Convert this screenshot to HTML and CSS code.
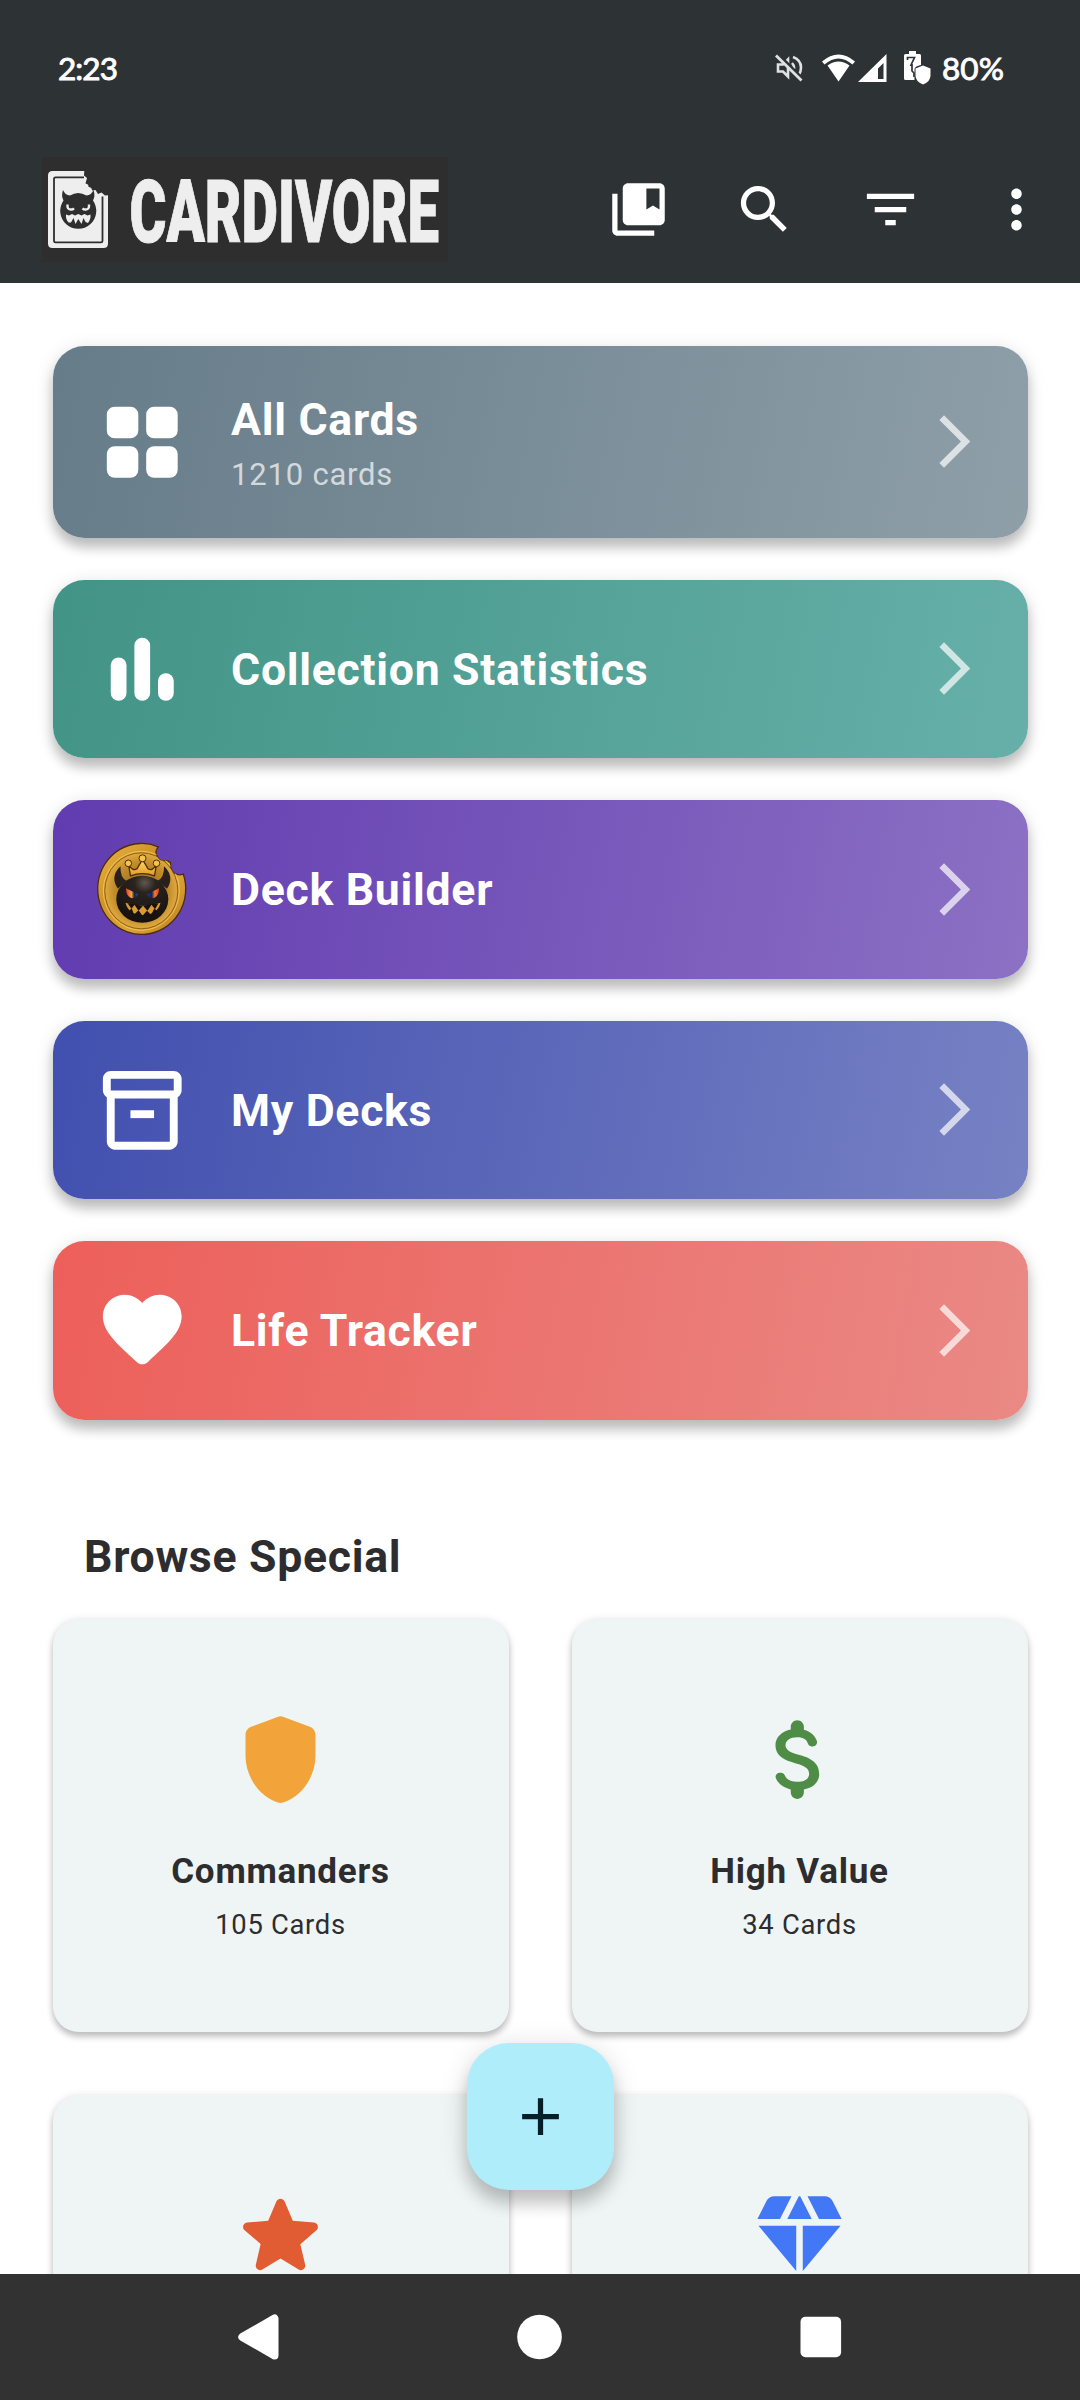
FILE: index.html
```html
<!DOCTYPE html>
<html lang="en">
<head>
<meta charset="utf-8">
<title>Cardivore</title>
<link rel="stylesheet" href="styles.css">
</head>
<body>
<div class="screen">
  <header class="top">
    <div class="status">
      <span class="clock">2:23</span>
      <div class="status-icons">
        <svg class="mute" width="28" height="28" viewBox="0 0 28 28" fill="none" stroke="#dfe1e2" stroke-width="2.600"><path d="M3 10.500h5l5-5v17l-5-5h-5z"/><path d="M17 9q4 4.500 0 9M18 3q8 3 8 10.500q0 4-2 7"/><path d="M3 0L28 25" stroke="#2d3235" stroke-width="3"/><path d="M1 1.500L26.500 26.500" stroke-width="2.800"/></svg>
        <svg class="wifi" width="33" height="28" viewBox="0 0 33 28"><path d="M0 7.500Q16.500-6.500 33 7.500L30.500 10.500Q16.500-1.500 2.500 10.500z" fill="#fff"/><path d="M5.500 11.500Q16.500 3.500 27.500 11.500L16.500 27.500z" fill="#fff"/></svg>
        <svg class="signal" width="29" height="28" viewBox="0 0 29 28"><path d="M28.500 0V28H0zM25.500 9L20 14.500V25H25.500z" fill="#fff" fill-rule="evenodd"/></svg>
        <svg class="battery" width="27" height="34" viewBox="0 0 27 34"><path d="M5 0h7v3h3.500q1.500 0 1.500 1.500V14q-6 1-6.500 4V29H1.500Q0 29 0 27.500V4.500Q0 3 1.500 3H5z" fill="#fff"/><path d="M3.500 9V6.500h7l-4 8.500M8 13v7l2 2v4" fill="none" stroke="#2d3235" stroke-width="1.700"/><path d="M19 14.500l7.500 3v7q0 6-7.500 9q-7.500-3-7.500-9v-7z" fill="#fff"/></svg>
        <span class="percent">80%</span>
      </div>
    </div>
    <div class="appbar">
      <svg class="logo" width="406" height="105" viewBox="0 0 406 105">
        <rect width="406" height="105" fill="#2e2e2e"/>
        <path d="M42.300 14H10.500Q6 14 6 18.500V86.500Q6 91 10.500 91H61.500Q66 91 66 86.500V38.300L63 38.500L59.500 35.500L56 37L53.500 33L50 33.500Q50 30 46.500 30Q47 27 43.500 26.500L45 21L42 18.500z" fill="#eee"/>
        <path d="M42 20.300H13.500Q12 20.300 12 22V84Q12 85.300 13.500 85.300H59Q60.500 85.300 60.500 84V39.500" fill="none" stroke="#2e2e2e" stroke-width="1.800"/>
        <path d="M21 33Q23 38 28 38.500Q36 33.500 44.500 38.500Q49.500 38 51.500 33Q53.500 39 51 43.500A18 18 0 1 1 21.500 43.500Q19 39 21 33z" fill="#2e2e2e"/>
        <path d="M25.500 47.500q-.5 5 3 5q2 .3 3.500-1.200M47 47.500q.5 5-3 5q-2 .3-3.500-1.200" fill="none" stroke="#eee" stroke-width="2.400"/>
        <path d="M24 57.500L27 58.500L30 57L33 58.500L36.300 57L39.500 58.500L42.500 57L45.500 58.500L48.500 57.500Q49 62 46 66L43.500 65L41.500 61L39.500 67L36.300 62L33.500 67L31.500 61L29 65.500L26.500 65.500Q23.500 62 24 57.500z" fill="#eee"/>
        <text class="wordmark" x="87.500" y="85" textLength="309.500" lengthAdjust="spacingAndGlyphs">CARDIVORE</text>
      </svg>
      <div class="actions">
        <span class="action"><svg viewBox="0 0 24 24"><path d="M4 6H2v14c0 1.100.9 2 2 2h14v-2H4V6z"/><path d="M20 2H8c-1.100 0-2 .9-2 2v12c0 1.100.9 2 2 2h12c1.100 0 2-.9 2-2V4c0-1.100-.9-2-2-2zm0 10l-2.500-1.500L15 12V4h5v8z"/></svg></span>
        <span class="action"><svg viewBox="0 0 24 24"><path d="M15.500 14h-.79l-.28-.27C15.410 12.590 16 11.110 16 9.500 16 5.910 13.090 3 9.500 3S3 5.910 3 9.500 5.910 16 9.500 16c1.610 0 3.090-.59 4.230-1.570l.27.28v.79l5 4.990L20.490 19l-4.990-5zm-6 0C7.010 14 5 11.990 5 9.500S7.010 5 9.500 5 14 7.010 14 9.500 11.990 14 9.500 14z"/></svg></span>
        <span class="action"><svg viewBox="0 0 24 24"><path d="M10 18h4v-2h-4v2zM3 6v2h18V6H3zm3 7h12v-2H6v2z"/></svg></span>
        <span class="action"><svg viewBox="0 0 24 24"><path d="M12 8c1.100 0 2-.9 2-2s-.9-2-2-2-2 .9-2 2 .9 2 2 2zm0 2c-1.100 0-2 .9-2 2s.9 2 2 2 2-.9 2-2-.9-2-2-2zm0 6c-1.100 0-2 .9-2 2s.9 2 2 2 2-.9 2-2-.9-2-2-2z"/></svg></span>
      </div>
    </div>
  </header>

  <main class="content">
    <nav class="menu">
      <a class="row row-all">
        <svg class="row-icon" viewBox="0 0 24 24"><rect x="3" y="3" width="8" height="8" rx="2"/><rect x="13" y="3" width="8" height="8" rx="2"/><rect x="3" y="13" width="8" height="8" rx="2"/><rect x="13" y="13" width="8" height="8" rx="2"/></svg>
        <span class="row-text"><span class="row-title">All Cards</span><span class="row-sub">1210 cards</span></span>
        <svg class="chevron" viewBox="0 0 24 24"><path d="M6.230 20.230L8 22l10-10L8 2 6.230 3.770 14.460 12z"/></svg>
      </a>
      <a class="row row-stats">
        <svg class="row-icon" viewBox="0 0 24 24"><rect x="4" y="9" width="4" height="11" rx="2"/><rect x="10" y="4" width="4" height="16" rx="2"/><rect x="16" y="13" width="4" height="7" rx="2"/></svg>
        <span class="row-text"><span class="row-title">Collection Statistics</span></span>
        <svg class="chevron" viewBox="0 0 24 24"><path d="M6.230 20.230L8 22l10-10L8 2 6.230 3.770 14.460 12z"/></svg>
      </a>
      <a class="row row-builder">
        <svg class="row-icon" viewBox="0 0 94.500 94.500">
          <defs>
            <linearGradient id="gold" x1="0" y1="0" x2="1" y2="1"><stop offset="0" stop-color="#edb644"/><stop offset=".35" stop-color="#cf9428"/><stop offset=".65" stop-color="#dba436"/><stop offset="1" stop-color="#b87b18"/></linearGradient>
            <radialGradient id="inner"><stop offset="0" stop-color="#8f6018"/><stop offset=".75" stop-color="#c28c2b"/><stop offset="1" stop-color="#dfab40"/></radialGradient>
            <radialGradient id="skin" cx=".55" cy=".15" r=".8"><stop offset="0" stop-color="#62574c"/><stop offset=".25" stop-color="#2a2421"/><stop offset="1" stop-color="#17120f"/></radialGradient>
            <linearGradient id="crown" x1="0" y1="0" x2="0" y2="1"><stop offset="0" stop-color="#ffdb62"/><stop offset="1" stop-color="#e39a26"/></linearGradient>
            <linearGradient id="eyeL"><stop offset="0" stop-color="#e83b18"/><stop offset=".45" stop-color="#f3a548"/><stop offset=".7" stop-color="#15243c"/><stop offset="1" stop-color="#2452d8"/></linearGradient>
            <linearGradient id="eyeR"><stop offset="0" stop-color="#1c2fc0"/><stop offset=".4" stop-color="#1a2440"/><stop offset=".65" stop-color="#f07c35"/><stop offset="1" stop-color="#e83b18"/></linearGradient>
            <clipPath id="coin-shape"><path d="M63.800 4Q59.500 9 63 14Q65 18.500 69 18Q73 17 76 20Q75.500 28 80 30.500Q84 33 88.800 31.300A44 45.500 0 1 1 63.800 4z"/></clipPath>
          </defs>
          <g transform="translate(-.5 .8)">
          <path d="M63.800 4Q59.500 9 63 14Q65 18.500 69 18Q73 17 76 20Q75.500 28 80 30.500Q84 33 88.800 31.300A44 45.500 0 1 1 63.800 4z" fill="url(#gold)" stroke="#4b2d0c" stroke-width="1.300"/>
          <g clip-path="url(#coin-shape)">
            <ellipse cx="46.800" cy="48" rx="36.500" ry="38" fill="url(#inner)" stroke="#8f6019" stroke-width="1"/>
            <ellipse cx="46.800" cy="48" rx="38" ry="39.500" fill="none" stroke="#f0c25a" stroke-width="1"/>
          </g>
          <path d="M26 23.500Q15 34 23.500 46L32 38Q25.500 35 26 23.500zM69.500 23.500Q80.500 34 72.500 46L63 38Q70 35 69.500 23.500z" fill="#2a211c"/>
          <ellipse cx="47.800" cy="56.500" rx="26" ry="23.500" fill="url(#skin)"/>
          <path d="M34 21.500Q38 29 42.500 26L48 16.500L53.500 26Q58 29 62 21.500L60 33Q48 28.500 36 33z" fill="url(#crown)" stroke="#4b2d0c" stroke-width="1.300"/>
          <g fill="#f5c34d" stroke="#4b2d0c"><circle cx="33.800" cy="20.500" r="3.300"/><circle cx="48" cy="15.500" r="3.500"/><circle cx="62" cy="20.500" r="3.300"/></g>
          <path d="M31.500 45.500L43.500 51.500Q41 56.500 36 55Q31.500 53 31.500 45.500z" fill="url(#eyeL)"/>
          <path d="M64.500 45.500L52.500 51.500Q55 56.500 60 55Q64.500 53 64.500 45.500z" fill="url(#eyeR)"/>
          <path d="M31 60Q48 66 66 60Q63 72 48.500 72.500Q34 72 31 60z" fill="#d99a35"/>
          <path d="M33 60.500L37 66L40 62L44 68L48.500 63L53 68L57 62L60.500 66.500L64 60.500L48 63zM34.500 69L37 65L39.500 72L44 67.500L48 73L52.500 68L56.500 72L60 65.500L63 69L58 74H39z" fill="#17120f"/>
          </g>
        </svg>
        <span class="row-text"><span class="row-title">Deck Builder</span></span>
        <svg class="chevron" viewBox="0 0 24 24"><path d="M6.230 20.230L8 22l10-10L8 2 6.230 3.770 14.460 12z"/></svg>
      </a>
      <a class="row row-decks">
        <svg class="row-icon" viewBox="0 0 24 24"><path d="M20 2H4c-1 0-2 .9-2 2v3.010c0 .72.43 1.340 1 1.690V20c0 1.100 1.100 2 2 2h14c.9 0 2-.9 2-2V8.700c.57-.35 1-.97 1-1.690V4c0-1.100-1-2-2-2zm-1 18H5V9h14v11zm1-13H4V4h16v3z"/><path d="M9 12h6v2H9z"/></svg>
        <span class="row-text"><span class="row-title">My Decks</span></span>
        <svg class="chevron" viewBox="0 0 24 24"><path d="M6.230 20.230L8 22l10-10L8 2 6.230 3.770 14.460 12z"/></svg>
      </a>
      <a class="row row-life">
        <svg class="row-icon" viewBox="0 0 24 24"><path d="M13.350 20.130c-.76.69-1.930.69-2.690-.01l-.11-.1C5.300 15.270 1.870 12.160 2 8.280c.06-1.700.93-3.330 2.340-4.290 2.640-1.800 5.900-.96 7.660 1.100 1.760-2.060 5.020-2.910 7.660-1.100 1.410.96 2.280 2.590 2.340 4.290.14 3.880-3.300 6.990-8.550 11.760l-.1.090z"/></svg>
        <span class="row-text"><span class="row-title">Life Tracker</span></span>
        <svg class="chevron" viewBox="0 0 24 24"><path d="M6.230 20.230L8 22l10-10L8 2 6.230 3.770 14.460 12z"/></svg>
      </a>
    </nav>

    <h2 class="section-title">Browse Special</h2>
    <div class="grid">
      <div class="card">
        <svg class="card-icon commanders" viewBox="0 0 24 24"><path d="M11.300 2.260l-6 2.250C4.520 4.810 4 5.550 4 6.390v4.710c0 4.830 3.130 9.370 7.430 10.750.37.12.77.12 1.140 0C16.870 20.480 20 15.930 20 11.100V6.390c0-.83-.52-1.580-1.300-1.870l-6-2.250c-.45-.18-.95-.18-1.400-.01z"/></svg>
        <span class="card-title">Commanders</span>
        <span class="card-sub">105 Cards</span>
      </div>
      <div class="card">
        <svg class="card-icon value" viewBox="0 0 24 24"><path d="M11.800 10.900c-2.270-.59-3-1.200-3-2.150 0-1.090 1.010-1.850 2.700-1.850 1.420 0 2.130.54 2.390 1.400.12.4.45.7.87.7h.3c.66 0 1.130-.65.9-1.270-.42-1.180-1.400-2.160-2.960-2.540V4.500c0-.83-.67-1.500-1.500-1.500S10 3.670 10 4.500v.66c-1.940.42-3.500 1.680-3.500 3.610 0 2.310 1.910 3.460 4.700 4.130 2.500.6 3 1.480 3 2.410 0 .69-.49 1.790-2.700 1.790-1.650 0-2.500-.59-2.830-1.430-.15-.39-.49-.67-.9-.67h-.28c-.67 0-1.140.68-.89 1.300.57 1.390 1.900 2.210 3.400 2.530v.67c0 .83.67 1.500 1.500 1.500s1.500-.67 1.500-1.500v-.65c1.950-.37 3.500-1.500 3.500-3.550 0-2.840-2.430-3.810-4.700-4.400z"/></svg>
        <span class="card-title">High Value</span>
        <span class="card-sub">34 Cards</span>
      </div>
      <div class="card">
        <svg class="card-icon star" viewBox="0 0 24 24"><path d="M12 17.270l4.150 2.510c.76.46 1.690-.22 1.490-1.080l-1.100-4.720 3.670-3.180c.67-.58.31-1.680-.57-1.750l-4.830-.41-1.890-4.460c-.34-.81-1.500-.81-1.840 0L9.190 8.630l-4.830.41c-.88.07-1.240 1.170-.57 1.750l3.670 3.180-1.100 4.720c-.2.86.73 1.540 1.490 1.080l4.150-2.500z"/></svg>
      </div>
      <div class="card">
        <svg class="card-icon gem" viewBox="0 0 24 24"><path d="M12.160 3h-.32L9.210 8.250h5.580zM16.460 8.250h5.160l-2.070-4.140C19.210 3.430 18.520 3 17.760 3h-3.930l2.630 5.250zM21.380 9.750h-8.630V20.100zM11.250 20.100V9.750H2.620zM7.540 8.250 10.160 3H6.240c-.76 0-1.450.43-1.790 1.110L2.380 8.250h5.160z"/></svg>
      </div>
    </div>
  </main>

  <footer class="navbar">
    <svg width="46" height="46" viewBox="0 0 46 46"><path d="M6.300 23L38.500 4.500V41.500z" fill="#fff" stroke="#fff" stroke-width="8" stroke-linejoin="round"/></svg>
    <svg width="46" height="46" viewBox="0 0 46 46"><circle cx="22.500" cy="23" r="22.300" fill="#fff"/></svg>
    <svg width="46" height="46" viewBox="0 0 46 46"><rect x="2.500" y="2.700" width="40.600" height="40.600" rx="5" fill="#fff"/></svg>
  </footer>
  <button class="fab"><svg viewBox="0 0 24 24"><path d="M19 13h-6v6h-2v-6H5v-2h6V5h2v6h6v2z"/></svg></button>
</div>
</body>
</html>
```
FILE: styles.css
```css
* { box-sizing: border-box; }
body { margin: 0; font-family: Roboto, sans-serif; background: #fff; }
svg { display: block; flex: none; }

.screen { position: relative; width: 1080px; height: 2400px; display: flex; flex-direction: column; overflow: hidden; }

.top { flex: none; height: 283px; background: #2d3235; color: #fff; }
.status { height: 136px; padding: 0 76px 0 58px; display: flex; justify-content: space-between; align-items: center; }
.clock, .percent { font-family: Lato, sans-serif; font-weight: 400; font-size: 31.5px; line-height: 36px; -webkit-text-stroke: 0.9px #fff; }
.clock { letter-spacing: -0.9px; }
.status-icons { display: flex; align-items: center; }
.wifi { margin-left: 19px; }
.signal { margin-left: 3px; }
.battery { margin-left: 17px; }
.percent { width: 62px; margin-left: 11px; letter-spacing: 0.1px; white-space: nowrap; }
.clock, .percent { padding-bottom: 1px; }

.appbar { height: 147px; display: flex; align-items: center; justify-content: space-between; padding-left: 42px; }
.logo { overflow: visible; }
.wordmark { font-weight: 900; font-size: 87.500px; fill: #eee; stroke: #eee; stroke-width: 1px; }
.actions { display: flex; margin-right: 0.5px; }
.action { width: 126px; height: 126px; display: flex; align-items: center; justify-content: center; fill: #fff; }
.action svg { width: 63px; height: 63px; }

.content { flex: 1; min-height: 0; overflow: hidden; padding: 63px 52.5px 0; }
.menu { display: flex; flex-direction: column; gap: 42px; }
.row { height: 178.5px; padding: 0 42px; display: flex; align-items: center; border-radius: 31.5px; color: #fff; box-shadow: 0 10px 12px rgba(0, 0, 0, .2), 0 3px 18px rgba(0, 0, 0, .13); }
.row-all { height: 191.5px; background: linear-gradient(101.1deg, #667c89, #8e9fa8); }
.row-stats { background: linear-gradient(100.4deg, #429486, #66b0a9); }
.row-builder { background: linear-gradient(100.4deg, #613bb0, #8c71c4); }
.row-decks { background: linear-gradient(100.4deg, #414faf, #7782c4); }
.row-life { background: linear-gradient(100.4deg, #ed5f5a, #ea8985); }
.row-icon { width: 94.5px; height: 94.5px; fill: #fff; }
.row-text { flex: 1; margin-left: 42px; padding-top: 2px; display: flex; flex-direction: column; }
.row-title { font-size: 44.6px; font-weight: 700; line-height: 60px; letter-spacing: 0.7px; }
.row-sub { font-size: 31px; line-height: 42px; letter-spacing: 0.8px; color: rgba(255, 255, 255, .7); margin-top: 4px; }
.chevron { width: 63px; height: 63px; fill: #fff; opacity: .7; }

.section-title { margin: 105px 0 0; padding: 0 31.5px; height: 94.5px; font-size: 44.6px; line-height: 64px; font-weight: 700; letter-spacing: 0.7px; color: #2d2d2f; }
.grid { display: grid; grid-template-columns: 1fr 1fr; grid-auto-rows: 412.7px; gap: 63px; }
.card { display: flex; flex-direction: column; align-items: center; padding-top: 88px; background: #eff5f5; border-radius: 26px; color: #2d2d2f; box-shadow: 0 5px 6px rgba(0, 0, 0, .2), 0 1px 9px rgba(0, 0, 0, .12); }
.card-icon { width: 105px; height: 105px; }
.commanders { fill: #f2a43b; }
.value { fill: #4f8d46; }
.star { fill: #e25c33; }
.gem { fill: #4277f6; }
.card-title { margin-top: 35.5px; font-size: 35px; line-height: 48px; font-weight: 700; letter-spacing: 0.75px; }
.card-sub { margin-top: 9px; font-size: 27.4px; line-height: 40px; letter-spacing: 0.7px; }

.navbar { flex: none; height: 126px; background: #323232; display: flex; align-items: center; justify-content: center; gap: 235px; }

.fab { position: absolute; left: 466.500px; top: 2043px; width: 147px; height: 147px; padding: 42px; border: 0; border-radius: 42px; background: #b0edfa; fill: #041f25; box-shadow: 0 14px 16px rgba(0, 0, 0, .18), 0 4px 28px rgba(0, 0, 0, .14); }
```
